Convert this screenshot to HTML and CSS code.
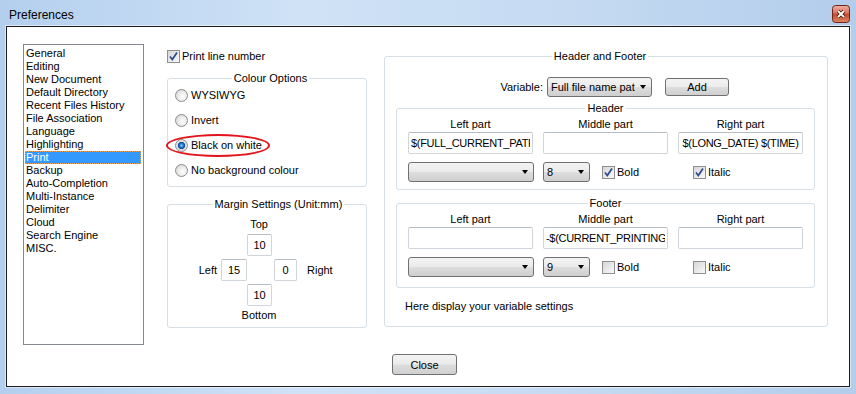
FILE: index.html
```html
<!DOCTYPE html>
<html lang="en">
<head>
    <meta charset="UTF-8">
    <title>Preferences</title>
    <link rel="stylesheet" href="styles.css">
</head>
<body>
    <div class="window">
        <div class="titlebar">
            <span class="title">Preferences</span>
            <span class="close-x">
                <svg width="18" height="18" viewBox="0 0 18 18">
                    <defs>
                        <linearGradient id="cx" x1="0" y1="0" x2="0" y2="1">
                            <stop offset="0" stop-color="#eeb1a2"/>
                            <stop offset="0.45" stop-color="#d9735c"/>
                            <stop offset="0.5" stop-color="#c4452c"/>
                            <stop offset="1" stop-color="#dc8a66"/>
                        </linearGradient>
                    </defs>
                    <rect x="0.5" y="0.5" width="17" height="17" rx="3" fill="url(#cx)" stroke="#6f2618"/>
                    <path d="M6 6L12 12M12 6L6 12" stroke="#3b1610" stroke-width="3.4"/>
                    <path d="M6 6L12 12M12 6L6 12" stroke="#fff" stroke-width="1.8"/>
                </svg>
            </span>
        </div>

        <div class="client">
            <div class="main">
                <ul class="nav-list">
                    <li>General</li>
                    <li>Editing</li>
                    <li>New Document</li>
                    <li>Default Directory</li>
                    <li>Recent Files History</li>
                    <li>File Association</li>
                    <li>Language</li>
                    <li>Highlighting</li>
                    <li class="selected">Print</li>
                    <li>Backup</li>
                    <li>Auto-Completion</li>
                    <li>Multi-Instance</li>
                    <li>Delimiter</li>
                    <li>Cloud</li>
                    <li>Search Engine</li>
                    <li>MISC.</li>
                </ul>

                <div class="col-mid">
                    <label class="check-row line-number">
                        <span class="check"><svg width="11" height="11" viewBox="0 0 11 11"><path d="M2 5.5L4.3 8.5L9 1.5" fill="none" stroke="#2d4b8c" stroke-width="1.7"/></svg></span>
                        Print line number
                    </label>

                    <fieldset class="group colour-group">
                        <legend>Colour Options</legend>
                        <label class="radio-row"><span class="radio"></span>WYSIWYG</label>
                        <label class="radio-row"><span class="radio"></span>Invert</label>
                        <label class="radio-row marked"><span class="radio on"></span>Black on white</label>
                        <label class="radio-row"><span class="radio"></span>No background colour</label>
                    </fieldset>

                    <fieldset class="group margin-group">
                        <legend>Margin Settings (Unit:mm)</legend>
                        <div class="margin-grid">
                            <span class="m-top-label">Top</span>
                            <input class="field m-top" type="text" value="10">
                            <span class="m-left-label">Left</span>
                            <input class="field m-left" type="text" value="15">
                            <input class="field m-right" type="text" value="0">
                            <span class="m-right-label">Right</span>
                            <input class="field m-bottom" type="text" value="10">
                            <span class="m-bottom-label">Bottom</span>
                        </div>
                    </fieldset>
                </div>

                <div class="col-right">
                    <fieldset class="group hf-group">
                        <legend>Header and Footer</legend>
                        <div class="variable-row">
                            <span class="variable-label">Variable:</span>
                            <div class="combo variable-combo"><span class="combo-text">Full file name pat</span><span class="arrow"></span></div>
                            <button class="btn add-btn">Add</button>
                        </div>

                        <fieldset class="group part-group">
                            <legend>Header</legend>
                            <div class="parts">
                                <span class="part-label">Left part</span>
                                <span class="part-label">Middle part</span>
                                <span class="part-label">Right part</span>
                                <input class="field part-field" type="text" value="$(FULL_CURRENT_PATH)">
                                <input class="field part-field" type="text" value="">
                                <input class="field part-field" type="text" value="$(LONG_DATE) $(TIME)">
                                <div class="combo font-combo"><span class="combo-text"></span><span class="arrow"></span></div>
                                <div class="size-cell">
                                    <div class="combo size-combo"><span class="combo-text">8</span><span class="arrow"></span></div>
                                    <label class="check-row bold-check">
                                        <span class="check"><svg width="11" height="11" viewBox="0 0 11 11"><path d="M2 5.5L4.3 8.5L9 1.5" fill="none" stroke="#2d4b8c" stroke-width="1.7"/></svg></span>
                                        Bold
                                    </label>
                                </div>
                                <div class="italic-cell">
                                    <label class="check-row">
                                        <span class="check"><svg width="11" height="11" viewBox="0 0 11 11"><path d="M2 5.5L4.3 8.5L9 1.5" fill="none" stroke="#2d4b8c" stroke-width="1.7"/></svg></span>
                                        Italic
                                    </label>
                                </div>
                            </div>
                        </fieldset>

                        <fieldset class="group part-group footer-group">
                            <legend>Footer</legend>
                            <div class="parts">
                                <span class="part-label">Left part</span>
                                <span class="part-label">Middle part</span>
                                <span class="part-label">Right part</span>
                                <input class="field part-field" type="text" value="">
                                <input class="field part-field" type="text" value="-$(CURRENT_PRINTING_PAGE)-">
                                <input class="field part-field" type="text" value="">
                                <div class="combo font-combo"><span class="combo-text"></span><span class="arrow"></span></div>
                                <div class="size-cell">
                                    <div class="combo size-combo"><span class="combo-text">9</span><span class="arrow"></span></div>
                                    <label class="check-row bold-check"><span class="check"></span>Bold</label>
                                </div>
                                <div class="italic-cell">
                                    <label class="check-row"><span class="check"></span>Italic</label>
                                </div>
                            </div>
                        </fieldset>

                        <p class="var-note">Here display your variable settings</p>
                    </fieldset>
                </div>
            </div>

            <div class="actions">
                <button class="btn close-btn">Close</button>
            </div>
        </div>
    </div>
</body>
</html>
```

FILE: styles.css
```css
body {
    margin: 0;
    font-family: "Liberation Sans", Arial, sans-serif;
    font-size: 11px;
    color: #000;
}
.window {
    width: 856px;
    height: 394px;
    box-sizing: border-box;
    padding: 0 6px 7px 6px;
    display: flex;
    flex-direction: column;
    background: linear-gradient(to right, #b4cfee, #cfe2f6 35%, #c6dbf2 65%, #b3cdeb);
}
.titlebar {
    height: 26px;
    display: flex;
    justify-content: space-between;
    align-items: flex-start;
    flex: none;
}
.title {
    font-size: 12px;
    line-height: 14px;
    margin: 8px 0 0 3px;
}
.close-x {
    margin: 5px 0 0 0;
    width: 18px;
    height: 18px;
}
.client {
    flex: 1;
    background: #fff;
    border: 1px solid #1c1c1c;
    box-shadow: 0 0 0 1px rgba(255, 255, 255, 0.5);
    padding: 17px 16px 0 16px;
}
.main {
    display: flex;
    align-items: flex-start;
}

/* category list */
.nav-list {
    list-style: none;
    margin: 0;
    padding: 2px 2px 0 1px;
    width: 121px;
    height: 301px;
    box-sizing: border-box;
    border: 1px solid #828790;
    flex: none;
}
.nav-list li {
    line-height: 13px;
    height: 13px;
    padding-left: 1px;
    white-space: nowrap;
}
.nav-list li.selected {
    background: #3399ff;
    color: #fff;
    outline: 1px dotted #e6a15c;
    outline-offset: -1px;
}

/* shared controls */
.group {
    margin: 0;
    border: 1px solid #d5dfe5;
    border-radius: 3px;
    min-width: 0;
}
.group legend {
    margin: 0 auto;
    padding: 0 2px;
    line-height: 13px;
}
.check-row {
    display: flex;
    align-items: center;
    line-height: 13px;
}
.check {
    width: 13px;
    height: 13px;
    box-sizing: border-box;
    border: 1px solid #8f8f8f;
    background: linear-gradient(135deg, #d6d6d6, #f9f9f9);
    margin-right: 2px;
    display: inline-flex;
    flex: none;
}
.radio-row {
    display: flex;
    align-items: center;
    height: 16px;
    width: max-content;
}
.radio {
    width: 13px;
    height: 13px;
    box-sizing: border-box;
    border-radius: 50%;
    border: 1px solid #8b8b8b;
    background: radial-gradient(circle at 60% 60%, #fdfdfd 0, #ececec 45%, #cfcfcf 100%);
    margin-right: 3px;
    flex: none;
}
.radio.on {
    background: radial-gradient(circle, #8fd0ff 0, #2273cc 2px, #0c4c9c 3.3px, #dddddd 4px, #efefef 100%);
}
.field {
    box-sizing: border-box;
    height: 22px;
    border: 1px solid #cfd5db;
    border-top-color: #b7bdc4;
    border-radius: 2px;
    padding: 0 2px;
    font: inherit;
    color: #000;
    background: #fff;
    text-align: center;
    outline: none;
}
.combo {
    box-sizing: border-box;
    height: 20px;
    border: 1px solid #707070;
    border-radius: 3px;
    background: linear-gradient(#f3f3f3, #ebebeb 48%, #dddddd 52%, #cfcfcf);
    display: flex;
    align-items: center;
    padding: 0 5px 0 3px;
}
.combo-text {
    flex: 1;
    white-space: nowrap;
    overflow: hidden;
}
.arrow {
    width: 0;
    height: 0;
    border-left: 3.5px solid transparent;
    border-right: 3.5px solid transparent;
    border-top: 4px solid #000;
    flex: none;
}
.btn {
    box-sizing: border-box;
    border: 1px solid #707070;
    border-radius: 3px;
    background: linear-gradient(#f3f3f3, #ebebeb 48%, #dddddd 52%, #cfcfcf);
    font: inherit;
    color: #000;
    padding: 0;
}

/* middle column */
.col-mid {
    margin-left: 23px;
    width: 200px;
    flex: none;
}
.line-number {
    margin-top: 6px;
}
.colour-group {
    margin-top: 9px;
    padding: 2px 0 8px 7px;
    display: flex;
    flex-direction: column;
    gap: 9px;
}
.marked {
    position: relative;
}
.marked::after {
    content: "";
    position: absolute;
    left: -9px;
    top: -3px;
    width: 100px;
    height: 19px;
    border: 2px solid #e3141c;
    border-radius: 50%;
}
.margin-group {
    margin-top: 11px;
    padding: 7px 0 5px 23px;
}
.margin-grid {
    display: grid;
    grid-template-columns: 30px 26px 27px 23px auto;
    grid-template-rows: 13px 22px 22px 22px 13px;
    row-gap: 3px;
    line-height: 13px;
}
.margin-grid .field {
    padding: 0;
}
.m-top-label {
    grid-column: 2 / 5;
    grid-row: 1;
    text-align: center;
}
.m-top {
    grid-column: 3;
    grid-row: 2;
    width: 25px;
}
.m-left-label {
    grid-column: 1;
    grid-row: 3;
    text-align: right;
    padding-right: 4px;
    align-self: center;
}
.m-left {
    grid-column: 2;
    grid-row: 3;
    width: 26px;
}
.m-right {
    grid-column: 4;
    grid-row: 3;
    width: 23px;
}
.m-right-label {
    grid-column: 5;
    grid-row: 3;
    padding-left: 10px;
    align-self: center;
}
.m-bottom {
    grid-column: 3;
    grid-row: 4;
    width: 25px;
}
.m-bottom-label {
    grid-column: 2 / 5;
    grid-row: 5;
    text-align: center;
}

/* header and footer column */
.col-right {
    margin-left: 17px;
    width: 444px;
    flex: none;
}
.hf-group {
    margin-top: 6px;
    padding: 14px 12px 13px 0;
}
.variable-row {
    display: flex;
    justify-content: flex-end;
    align-items: center;
    height: 20px;
    padding-right: 86px;
}
.variable-label {
    margin-right: 4px;
}
.variable-combo {
    width: 105px;
}
.add-btn {
    width: 64px;
    height: 18px;
    margin-left: 13px;
}
.part-group {
    margin: 5px 0 0 11px;
    padding: 3px 11px 7px 11px;
}
.footer-group {
    margin-top: 7px;
    padding-bottom: 10px;
}
.parts {
    display: grid;
    grid-template-columns: repeat(3, 125px);
    column-gap: 10px;
}
.part-label {
    text-align: center;
    line-height: 13px;
}
.part-field {
    width: 125px;
    margin-top: 1px;
    letter-spacing: -0.3px;
}
.font-combo,
.size-cell,
.italic-cell {
    margin-top: 8px;
}
.font-combo {
    width: 126px;
}
.size-cell {
    display: flex;
    align-items: center;
}
.size-combo {
    width: 47px;
}
.bold-check {
    margin-left: 12px;
}
.italic-cell {
    display: flex;
    align-items: center;
    padding-left: 15px;
}
.var-note {
    margin: 12px 0 0 20px;
    line-height: 13px;
}

/* bottom button */
.actions {
    display: flex;
    justify-content: center;
    margin-top: 9px;
    padding-right: 7px;
}
.close-btn {
    width: 65px;
    height: 21px;
}
```
